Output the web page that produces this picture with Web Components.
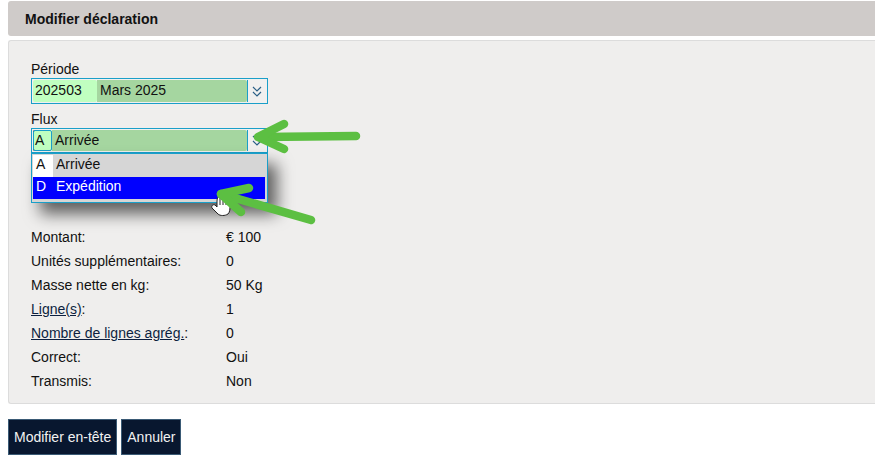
<!DOCTYPE html>
<html lang="fr">
<head>
<meta charset="utf-8">
<title>Modifier déclaration</title>
<style>
  html, body { margin: 0; padding: 0; background: #fff; overflow: hidden; }
  body { width: 875px; height: 458px; position: relative; font: 14px "Liberation Sans", Arial, sans-serif; color: #111; }
  .page { padding: 1px 0 0 8px; }
</style>
</head>
<body>
<div class="page">
  <title-bar>Modifier déclaration</title-bar>
  <form-panel>
    <combo-field label="Période" code="202503" name="Mars 2025" code-width="64"></combo-field>
    <combo-field label="Flux" code="A" name="Arrivée" code-width="19" open></combo-field>
    <info-row label="Montant:" value="€ 100"></info-row>
    <info-row label="Unités supplémentaires:" value="0"></info-row>
    <info-row label="Masse nette en kg:" value="50 Kg"></info-row>
    <info-row label="Ligne(s)" suffix=":" value="1" link></info-row>
    <info-row label="Nombre de lignes agrég." suffix=":" value="0" link></info-row>
    <info-row label="Correct:" value="Oui"></info-row>
    <info-row label="Transmis:" value="Non"></info-row>
  </form-panel>
  <button-bar>
    <dark-button>Modifier en-tête</dark-button>
    <dark-button style="padding-right: 4px">Annuler</dark-button>
  </button-bar>
</div>
<arrow-overlay></arrow-overlay>

<script>
class TitleBar extends HTMLElement {
    constructor() {
        super();
        this.attachShadow({ mode: 'open' });
    }
    connectedCallback() {
        this.shadowRoot.innerHTML = `
            <style>
            :host {
                display: flex;
                align-items: center;
                height: 35px;
                padding-left: 17px;
                background: #cfcbc9;
                border-radius: 3px 0 0 3px;
                font-size: 14px;
                font-weight: bold;
                color: #111;
            }
            </style>
            <slot></slot>`;
    }
}

class FormPanel extends HTMLElement {
    constructor() {
        super();
        this.attachShadow({ mode: 'open' });
    }
    connectedCallback() {
        this.shadowRoot.innerHTML = `
            <style>
            :host {
                display: block;
                box-sizing: border-box;
                margin-top: 4px;
                height: 364px;
                padding: 20px 0 0 22px;
                background: #efeeed;
                border: 1px solid #dcdcdc;
                border-right: none;
                border-radius: 3px 0 0 3px;
            }
            </style>
            <slot></slot>`;
    }
}

class ComboField extends HTMLElement {
    constructor() {
        super();
        this.attachShadow({ mode: 'open' });
    }
    connectedCallback() {
        const label = this.getAttribute('label');
        const code = this.getAttribute('code');
        const name = this.getAttribute('name');
        const codeWidth = this.getAttribute('code-width');
        const open = this.hasAttribute('open');

        this.shadowRoot.innerHTML = `
            <style>
            :host {
                display: block;
                position: relative;
                width: 237px;
                height: ${open ? 114 : 50}px;
                font-size: 14px;
            }
            .label { height: 17px; line-height: 17px; }
            .box {
                box-sizing: border-box;
                display: flex;
                height: ${open ? 25 : 26}px;
                padding: 1px;
                border: 1px solid #1a9fc9;
                background: #f1f0ef;
            }
            .code {
                box-sizing: border-box;
                width: ${codeWidth}px;
                padding-left: 2px;
                background: #c0ffc0;
                line-height: 21px;
                border-radius: 2px;
            }
            .code.focus {
                outline: 1px solid #1a9fc9;
                outline-offset: -1px;
                border-left: 1px solid #111;
                padding-left: 1px;
            }
            .name {
                flex: 1;
                padding-left: 3px;
                background: #a5d6a0;
                line-height: 21px;
                border-radius: 0 2px 2px 0;
            }
            .chev {
                box-sizing: border-box;
                width: 19px;
                border-left: 1px solid #1a9fc9;
                display: flex;
                align-items: center;
                justify-content: center;
            }
            .list {
                position: absolute;
                left: 0;
                top: 42px;
                box-sizing: border-box;
                width: 237px;
                height: 50px;
                padding: 1px 2px 0 1px;
                border: 1px solid #1a9fc9;
                background: #d6d6d6;
                box-shadow: 9px 11px 16px rgba(0, 0, 0, 0.6);
                z-index: 2;
            }
            .opt { display: flex; height: 22px; line-height: 18px; }
            .opt .c { width: 20px; padding-left: 3px; box-sizing: border-box; }
            .opt .n { padding-left: 3px; }
            .opt.first .c { background: #fff; }
            .opt.sel { background: #0000ff; color: #fff; }
            </style>
            <div class="label">${label}</div>
            <div class="box">
                <div class="code${open ? ' focus' : ''}">${code}</div>
                <div class="name">${name}</div>
                <div class="chev">
                    <svg width="10" height="11" viewBox="0 0 10 11" fill="none" stroke="#2a5f86" stroke-width="1.2">
                        <path d="M1 1 L5 5 L9 1"/><path d="M1 6 L5 10 L9 6"/>
                    </svg>
                </div>
            </div>
            ${open ? `
            <div class="list">
                <div class="opt first"><span class="c">A</span><span class="n">Arrivée</span></div>
                <div class="opt sel"><span class="c">D</span><span class="n">Expédition</span></div>
            </div>` : ''}`;
    }
}

class InfoRow extends HTMLElement {
    constructor() {
        super();
        this.attachShadow({ mode: 'open' });
    }
    connectedCallback() {
        const label = this.getAttribute('label');
        const suffix = this.getAttribute('suffix') || '';
        const value = this.getAttribute('value');
        const link = this.hasAttribute('link');

        this.shadowRoot.innerHTML = `
            <style>
            :host {
                display: flex;
                height: 24px;
                line-height: 24px;
                font-size: 14px;
            }
            .l { width: 195px; }
            a { color: #0c1f3f; text-decoration: underline; }
            </style>
            <div class="l">${link ? `<a>${label}</a>` : label}${suffix}</div>
            <div>${value}</div>`;
    }
}

class ButtonBar extends HTMLElement {
    constructor() {
        super();
        this.attachShadow({ mode: 'open' });
    }
    connectedCallback() {
        this.shadowRoot.innerHTML = `
            <style>
            :host { display: flex; gap: 4px; margin-top: 15px; }
            </style>
            <slot></slot>`;
    }
}

class DarkButton extends HTMLElement {
    constructor() {
        super();
        this.attachShadow({ mode: 'open' });
    }
    connectedCallback() {
        this.shadowRoot.innerHTML = `
            <style>
            :host {
                display: flex;
                align-items: center;
                box-sizing: border-box;
                height: 36px;
                padding: 0 5px;
                background: #08172f;
                border: 1px solid #3a5a75;
                color: #f2f2f2;
                font-size: 14px;
            }
            </style>
            <slot></slot>`;
    }
}

class ArrowOverlay extends HTMLElement {
    constructor() {
        super();
        this.attachShadow({ mode: 'open' });
    }
    connectedCallback() {
        this.shadowRoot.innerHTML = `
            <style>
            :host { position: absolute; left: 0; top: 0; width: 875px; height: 458px; pointer-events: none; z-index: 5; }
            svg { display: block; }
            </style>
            <svg width="875" height="458" viewBox="0 0 875 458">
                <path d="M221 196 C218 196 217 198 217 201 L217 207 L215 205 C213 204 211 206 212 208 L218 214 C220 216 225 216 228 214 C230 212 230 209 230 205 L230 201 C230 199 228 199 227 200 C227 198 225 198 224 199 L224 197 C224 196 222 195 221 196 Z" fill="#fff" stroke="#222" stroke-width="1"/>
                <path d="M220 197 V205 M223 199 V205 M226 201 V205" stroke="#222" stroke-width="1" fill="none"/>
                <g fill="none" stroke="#5cbf42" stroke-width="8.5" stroke-linecap="round" stroke-linejoin="round">
                    <path d="M356 136 L262 137"/>
                    <path d="M284 124 L258 137 L284 149"/>
                    <path d="M311 220 L221 194"/>
                    <path d="M249 188 L221 194 L241 212"/>
                </g>
            </svg>`;
    }
}

customElements.define('title-bar', TitleBar);
customElements.define('form-panel', FormPanel);
customElements.define('combo-field', ComboField);
customElements.define('info-row', InfoRow);
customElements.define('button-bar', ButtonBar);
customElements.define('dark-button', DarkButton);
customElements.define('arrow-overlay', ArrowOverlay);
</script>
</body>
</html>
